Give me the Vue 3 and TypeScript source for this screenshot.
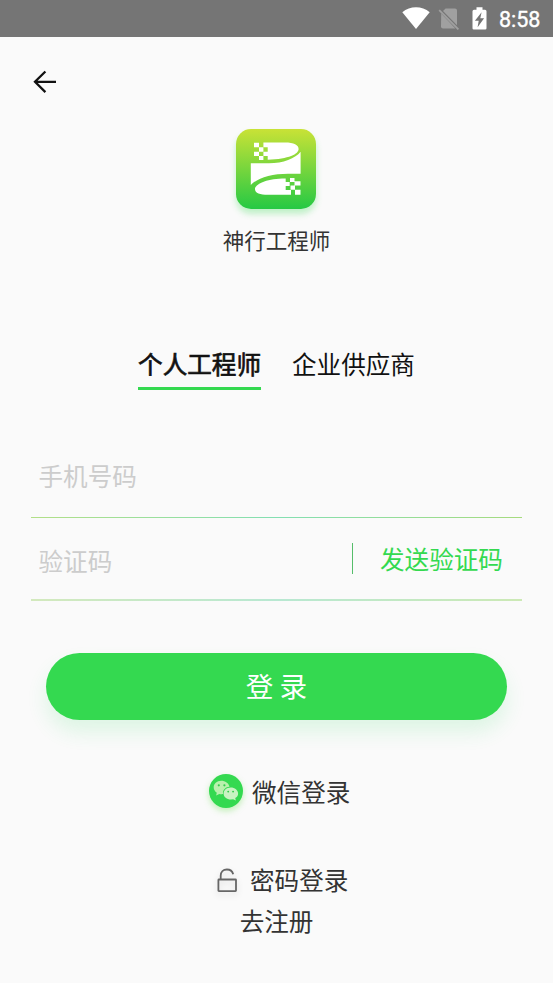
<script setup lang="ts">
import { ref } from 'vue'

interface Tab {
  id: string
  label: string
}

const tabs: Tab[] = [
  { id: 'personal', label: '个人工程师' },
  { id: 'company', label: '企业供应商' },
]
const activeTab = ref<string>('personal')
const phone = ref<string>('')
const code = ref<string>('')
</script>

<template>
  <div class="screen">
    <div class="status-bar">
      <svg class="wifi" width="28" height="22" viewBox="0 0 28 22">
        <path d="M0.3 5.2C8-1.4 20-1.4 27.7 5.2L14 22Z" fill="#fff" />
      </svg>
      <svg class="sim" width="22" height="22" viewBox="0 0 22 22">
        <path d="M7.6 0.4H17a2 2 0 0 1 2 2V17.2L5 3Z" fill="#a0a0a0" />
        <path d="M3.2 5.6 17.4 20.4H5a2 2 0 0 1-2-2Z" fill="#a0a0a0" />
        <path d="M1.2 2.2 20.4 21.4" stroke="#a0a0a0" stroke-width="1.8" />
      </svg>
      <svg class="battery" width="15" height="23" viewBox="0 0 15 23">
        <path d="M4.5 0.3h6v2.4H13a1.5 1.5 0 0 1 1.5 1.5v17A1.3 1.3 0 0 1 13.2 22.5H1.8A1.3 1.3 0 0 1 0.5 21.2V4.2A1.5 1.5 0 0 1 2 2.7h2.5Z" fill="#fff" />
        <path d="M9.6 5.2 2.9 13.7H6.7L5.6 20.2L12.1 11.3H8.300Z" fill="#757575" />
      </svg>
      <span class="clock">8:58</span>
    </div>

    <header class="nav">
      <button class="back" aria-label="返回">
        <svg width="24" height="24" viewBox="0 0 24 24" fill="none" stroke="#111" stroke-width="2.3">
          <path d="M12.4 1.5 2 11.8 12.4 22.1M2 11.8H23" />
        </svg>
      </button>
    </header>

    <div class="brand">
      <div class="logo">
        <svg width="80" height="80" viewBox="0 0 80 80" fill="#fff">
          <path d="M27.4 13.6H49C58 13.6 62.6 16.3 62.6 20C62.6 25 53 30 31.7 30.7V27H27.4V22.7H31.7V18.3H27.4Z" />
          <path d="M14.8 34.3H33C47 34.3 59.5 29.5 64.6 22.8V44.7H52C35 44.7 20.5 49.5 14.8 56Z" />
          <path d="M49.700 49.600H46C30 50 19 55.500 19 60.200C19 64 24 65.800 32 65.800H55V61H49.700V57H53.700V53H49.700Z" />
          <path d="M18 13.700h5v4.600h-5zM23 18.300h4.400v4.400H23zM18 22.700h5V27h-5zM23 27h4.400v4H23z" />
          <path d="M54 49h4.500v4H54zM58.500 52.300h6v4.200h-6zM54.500 56.500h4.500v4.200h-4.500zM59 60.700h5.500v5.100H59z" />
        </svg>
      </div>
      <div class="brand-name">神行工程师</div>
    </div>

    <nav class="tabs">
      <button
        v-for="tab in tabs"
        :key="tab.id"
        class="tab"
        :class="{ active: tab.id === activeTab }"
        @click="activeTab = tab.id"
      >{{ tab.label }}</button>
    </nav>

    <form class="form" @submit.prevent>
      <div class="field phone">
        <input v-model="phone" type="tel" placeholder="手机号码" />
      </div>
      <div class="field code">
        <input v-model="code" type="text" placeholder="验证码" />
        <button type="button" class="send">发送验证码</button>
      </div>
      <button class="submit" type="submit">登 录</button>
    </form>

    <div class="wechat">
      <span class="wechat-icon">
        <svg width="34" height="34" viewBox="0 0 34 34">
          <path d="M12.2 6.7C7.7 6.7 4.700 9.700 4.700 13.300C4.700 15.600 5.900 17.500 7.800 18.700L7.100 21.600L10.300 19.900C11.400 20.200 12.800 20.300 14.100 20.100C13.200 16 17 12.700 20.500 12.700C19.700 9.200 16.300 6.700 12.200 6.700Z" fill="#b9f0ad" />
          <path d="M21.700 13.400C17.500 13.400 14.600 16.200 14.600 19.500C14.600 23 17.800 25.500 21.900 25.500L24.100 25.200L26.900 26.600L26.200 24.100C28.100 23 29.100 21.300 29.100 19.400C29.100 16.100 25.900 13.400 21.700 13.400Z" fill="#c9f3c2" />
          <g fill="#32cd4b"><circle cx="9.800" cy="11.300" r="1.100" /><circle cx="15.400" cy="11.300" r="1.100" /><circle cx="19.200" cy="17.600" r=".95" /><circle cx="24.100" cy="17.600" r=".95" /></g>
        </svg>
      </span>
      <span class="wechat-label">微信登录</span>
    </div>

    <div class="password">
      <svg class="lock" width="20" height="25" viewBox="0 0 20 25" fill="none" stroke="#666" stroke-width="1.8">
        <rect x="1.4" y="11.5" width="17.6" height="11.6" rx=".5" />
        <path d="M3.7 11.3V7.8C3.7 3.8 6.3 1.5 9.9 1.5C13.1 1.5 15.4 3.2 16.2 6.2" />
      </svg>
      <span>密码登录</span>
    </div>
    <div class="register">去注册</div>
  </div>
</template>

<style>
body {
  margin: 0;
  background: #fafafa;
}
</style>

<style scoped>
.screen {
  box-sizing: border-box;
  width: 553px;
  height: 983px;
  overflow: hidden;
  background: #fafafa;
  color: #333;
  font-family: "Noto Sans CJK SC", sans-serif;
  font-size: 24.58px;
  line-height: 36px;
}
button,
input {
  font: inherit;
  border: 0;
  padding: 0;
  margin: 0;
  background: none;
  outline: none;
}
svg {
  display: block;
  flex: none;
}
.status-bar {
  display: flex;
  box-sizing: border-box;
  height: 37px;
  padding: 7px 0 0 402px;
  background: #757575;
}
.sim {
  margin: 1px 0 0 8px;
}
.battery {
  margin-left: 12px;
}
.clock {
  margin-left: 12px;
  color: #fff;
  font: 400 21.5px/25px Roboto, sans-serif;
  -webkit-text-stroke: 0.4px #fff;
}
.nav {
  height: 92px;
  box-sizing: border-box;
  padding: 33px 0 0 33px;
}
.back {
  display: block;
}
.brand {
  display: flex;
  flex-direction: column;
  align-items: center;
  height: 215px;
}
.logo {
  width: 80px;
  height: 80px;
  margin-right: 1px;
  border-radius: 15px;
  background: linear-gradient(#c9e236, #25c944);
  box-shadow: 0 5px 6px rgba(52, 217, 80, 0.3);
}
.brand-name {
  margin-top: 13px;
  font-size: 21.5px;
}
.tabs {
  display: flex;
  justify-content: center;
  gap: 31px;
  height: 109px;
}
.tab {
  box-sizing: border-box;
  height: 46px;
  padding-bottom: 6px;
  color: #111;
  border-bottom: 3px solid transparent;
}
.tab.active {
  -webkit-text-stroke: 0.7px #111;
  border-color: #34d950;
}
.form {
  padding: 0 31px;
}
.field {
  display: flex;
  position: relative;
  box-sizing: border-box;
  padding-left: 7.5px;
}
.field::after {
  content: "";
  position: absolute;
  right: 0;
  bottom: 0;
  left: 0;
  height: 1px;
  background: linear-gradient(90deg, #b2df87, #83dfb2 50%, #a6db7e);
}
.phone {
  height: 65px;
}
.code {
  height: 83px;
}
.code::after {
  height: 2px;
  background: linear-gradient(90deg, #d3e9bd, #b8e8d2 50%, #cce9b5);
}
.field input {
  flex: 1;
  min-width: 0;
  height: 44px;
  color: #333;
}
.code input {
  margin-top: 20px;
}
.field input::placeholder {
  color: #ccc;
  opacity: 1;
}
.send {
  box-sizing: border-box;
  width: 170px;
  height: 31px;
  margin-top: 25px;
  padding: 0 0 1px 27px;
  border-left: 1px solid #55bd6a;
  color: #34d950;
  line-height: 30px;
  text-align: left;
  white-space: nowrap;
}
.submit {
  display: block;
  width: 461px;
  height: 67px;
  margin: 52px 0 0 15px;
  padding-bottom: 3px;
  border-radius: 34px;
  background: #34d950;
  box-shadow: 0 12px 20px rgba(52, 217, 100, 0.14);
  color: #fff;
  font-size: 27.65px;
}
.wechat {
  display: flex;
  height: 36px;
  margin: 54px 0 0 209px;
}
.wechat-icon {
  width: 34px;
  height: 34px;
  margin-right: 9px;
  border-radius: 50%;
  background: #34d950;
  box-shadow: 0 3px 6px rgba(90, 220, 60, 0.35);
}
.wechat-label {
  line-height: 34px;
}
.password {
  display: flex;
  height: 36px;
  margin: 51px 0 0 217px;
}
.lock {
  margin: 7px 13px 0 0;
  filter: drop-shadow(0 3px 3px rgba(0, 0, 0, 0.12));
}
.register {
  margin-top: 5px;
  text-align: center;
}
</style>
